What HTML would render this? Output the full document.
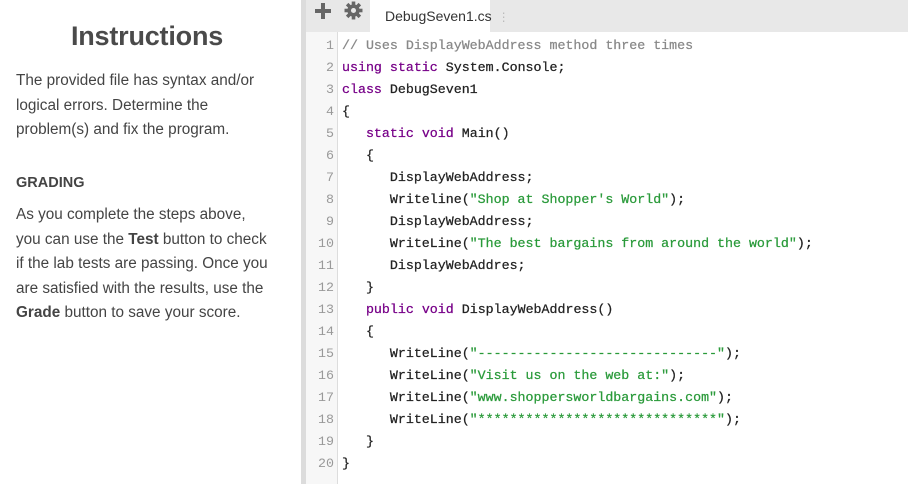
<!DOCTYPE html>
<html><head><style>
body{margin:0;width:908px;height:484px;overflow:hidden;background:#fff;font-family:"Liberation Sans",sans-serif;position:relative}
#left{position:absolute;left:0;top:0;width:301px;height:484px;background:#fff;color:#444}
#left h1{position:absolute;left:0;width:294px;text-align:center;top:21px;margin:0;font-size:27px;font-weight:bold;color:#4a4a4a;letter-spacing:-0.2px}
#left p{position:absolute;left:16px;margin:0;font-size:15.3px;line-height:24.5px;width:290px;white-space:nowrap}
#left .g{position:absolute;left:16px;top:175px;font-weight:bold;font-size:14.5px}
#strip{position:absolute;left:301px;top:0;width:5px;height:484px;background:#dcdcdc}
#bar{position:absolute;left:306px;top:0;width:602px;height:32px;background:#e8e8e8}
#tab{position:absolute;left:370px;top:0;width:120px;height:32px;background:#fff;font-size:14px;color:#333;line-height:32px;padding-left:15px;box-sizing:border-box}
#tab span{color:#bbb;margin-left:6px;font-size:12px}
#gut{position:absolute;left:306px;top:32px;width:31px;height:452px;background:#f7f7f7;border-right:1px solid #ddd}
.ln{position:absolute;left:306px;width:28px;text-align:right;font-family:"Liberation Mono",monospace;font-size:13.3px;color:#999;height:22px;line-height:22px}
.cl{position:absolute;left:342px;font-family:"Liberation Mono",monospace;font-size:13.3px;color:#222;white-space:pre;height:22px;line-height:22px;-webkit-text-stroke:0.25px currentColor}
.k{color:#708}.s{color:#2a9a3a}.c{color:#888}
</style></head><body>
<div id="left">
<h1>Instructions</h1>
<p style="top:69px">The provided file has syntax and/or<br>logical errors. Determine the<br>problem(s) and fix the program.</p>
<div class="g">GRADING</div>
<p style="top:203px">As you complete the steps above,<br>you can use the <b>Test</b> button to check<br>if the lab tests are passing. Once you<br>are satisfied with the results, use the<br><b>Grade</b> button to save your score.</p>
</div>
<div id="strip"></div>
<div id="bar">
<svg style="position:absolute;left:8px;top:2px" width="18" height="18" viewBox="0 0 18 18"><path d="M7 1h4v6h6v4h-6v6H7v-6H1V7h6z" fill="#666"/></svg>
<svg style="position:absolute;left:38px;top:1px" width="19" height="19" viewBox="0 0 18 18"><g fill="#666"><circle cx="9" cy="9" r="5.8"/><rect x="7.3" y="0.5" width="3.4" height="17"/><rect x="0.5" y="7.3" width="17" height="3.4"/><rect x="7.3" y="0.5" width="3.4" height="17" transform="rotate(45 9 9)"/><rect x="7.3" y="0.5" width="3.4" height="17" transform="rotate(-45 9 9)"/></g><circle cx="9" cy="9" r="2.4" fill="#e8e8e8"/></svg>
</div>
<div id="tab">DebugSeven1.cs<span>⋮</span></div>
<div id="gut"></div>
<div class="ln" style="top:35px">1</div><div class="cl" style="top:35px"><span class="c">// Uses DisplayWebAddress method three times</span></div>
<div class="ln" style="top:57px">2</div><div class="cl" style="top:57px"><span class="k">using</span> <span class="k">static</span> System.Console;</div>
<div class="ln" style="top:79px">3</div><div class="cl" style="top:79px"><span class="k">class</span> DebugSeven1</div>
<div class="ln" style="top:101px">4</div><div class="cl" style="top:101px">{</div>
<div class="ln" style="top:123px">5</div><div class="cl" style="top:123px">   <span class="k">static</span> <span class="k">void</span> Main()</div>
<div class="ln" style="top:145px">6</div><div class="cl" style="top:145px">   {</div>
<div class="ln" style="top:167px">7</div><div class="cl" style="top:167px">      DisplayWebAddress;</div>
<div class="ln" style="top:189px">8</div><div class="cl" style="top:189px">      Writeline(<span class="s">"Shop at Shopper's World"</span>);</div>
<div class="ln" style="top:211px">9</div><div class="cl" style="top:211px">      DisplayWebAddress;</div>
<div class="ln" style="top:233px">10</div><div class="cl" style="top:233px">      WriteLine(<span class="s">"The best bargains from around the world"</span>);</div>
<div class="ln" style="top:255px">11</div><div class="cl" style="top:255px">      DisplayWebAddres;</div>
<div class="ln" style="top:277px">12</div><div class="cl" style="top:277px">   }</div>
<div class="ln" style="top:299px">13</div><div class="cl" style="top:299px">   <span class="k">public</span> <span class="k">void</span> DisplayWebAddress()</div>
<div class="ln" style="top:321px">14</div><div class="cl" style="top:321px">   {</div>
<div class="ln" style="top:343px">15</div><div class="cl" style="top:343px">      WriteLine(<span class="s">"------------------------------"</span>);</div>
<div class="ln" style="top:365px">16</div><div class="cl" style="top:365px">      WriteLine(<span class="s">"Visit us on the web at:"</span>);</div>
<div class="ln" style="top:387px">17</div><div class="cl" style="top:387px">      WriteLine(<span class="s">"www.shoppersworldbargains.com"</span>);</div>
<div class="ln" style="top:409px">18</div><div class="cl" style="top:409px">      WriteLine(<span class="s">"******************************"</span>);</div>
<div class="ln" style="top:431px">19</div><div class="cl" style="top:431px">   }</div>
<div class="ln" style="top:453px">20</div><div class="cl" style="top:453px">}</div>
</body></html>
